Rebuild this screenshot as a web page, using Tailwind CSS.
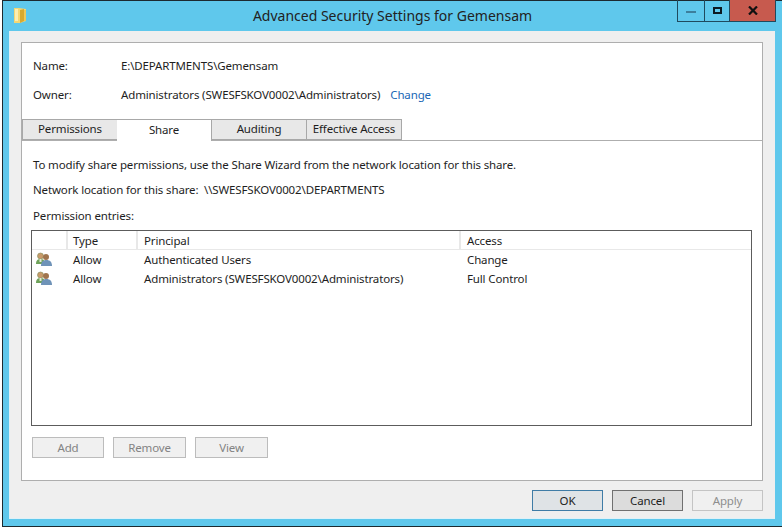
<!DOCTYPE html>
<html>
<head>
<meta charset="utf-8">
<script src="https://cdn.jsdelivr.net/npm/@tailwindcss/browser@4"></script>
</head>
<body class="bg-white">
<div class="w-[782px] h-[528px] overflow-hidden font-['Noto_Sans','Open_Sans',sans-serif] text-[11.5px] tracking-[-0.14px] leading-[16px] text-[#1e1e1e] pl-[2px]">
  <div class="w-[780px] h-[527px] bg-[#5fc8ec] border-l border-t border-b border-[#1c2a30] flex flex-col">
    <div class="h-[30px] shrink-0 relative flex items-center justify-center">
      <svg class="absolute left-[10px] top-[6px]" width="14" height="17" viewBox="0 0 14 17"><path d="M1 1h5l7 1v12l-6 2H1z" fill="#f4d774"/><path d="M7 3l4-1v12l-4 2z" fill="#d9a92f"/><path d="M2 2h3v12H2z" fill="#fbeeb0"/><path d="M11 3h2v11h-2z" fill="#f0c95a"/></svg>
      <span class="text-[14px] tracking-normal leading-[20px] text-[#222]">Advanced Security Settings for Gemensam</span>
      <div class="absolute right-[6px] top-[-1px] flex h-[22px] border border-t-0 border-[#1f4a5e]">
        <div class="w-[27px] border-r border-[#1f4a5e] flex items-center justify-center"><div class="w-[10px] h-[2px] mt-[2px] bg-[#3c7f9c]"></div></div>
        <div class="w-[25px] border-r border-[#1f4a5e] flex items-center justify-center"><div class="w-[9px] h-[7px] border-2 border-[#0c1a22]"></div></div>
        <div class="w-[45px] bg-[#c75a4e] flex items-center justify-center"><svg width="10" height="9" viewBox="0 0 10 9"><path d="M1 .5l8 8M9 .5l-8 8" stroke="#111" stroke-width="2.2" fill="none"/></svg></div>
      </div>
    </div>
    <div class="ml-[6px] mr-[7px] h-[488px] bg-[#efefef] border-l border-b border-[#dff1f8] pt-[11px] pl-[11px] pr-[12px]">
      <div class="h-[439px] bg-white border border-[#aeaeae] flex flex-col">
        <div class="h-[76px] shrink-0 pl-[11px] pt-[15px]">
          <div class="flex h-[16px]"><span class="w-[88px]">Name:</span><span>E:\DEPARTMENTS\Gemensam</span></div>
          <div class="flex h-[16px] mt-[13px]"><span class="w-[88px]">Owner:</span><span>Administrators (SWESFSKOV0002\Administrators)</span><span class="ml-[10px] text-[#1a67b5]">Change</span></div>
        </div>
        <div class="h-[22px] shrink-0 flex border-b border-[#aeaeae]">
          <div class="w-[96px] h-[21px] pb-px bg-[#e8e8e8] border border-[#a8a8a8] flex items-center justify-center">Permissions</div>
          <div class="w-[95px] h-[22px] pb-[2px] bg-white border-t border-r border-[#a8a8a8] flex items-center justify-center -ml-px z-10">Share</div>
          <div class="w-[95px] h-[21px] pb-px bg-[#e8e8e8] border-t border-b border-r border-[#a8a8a8] flex items-center justify-center">Auditing</div>
          <div class="w-[95px] h-[21px] pb-px bg-[#e8e8e8] border-t border-b border-r border-[#a8a8a8] flex items-center justify-center">Effective Access</div>
        </div>
        <div class="pl-[11px] pt-[16px]">
          <div>To modify share permissions, use the Share Wizard from the network location for this share.</div>
          <div class="mt-[9px]">Network location for this share:&nbsp; \\SWESFSKOV0002\DEPARTMENTS</div>
          <div class="mt-[10px]">Permission entries:</div>
        </div>
        <div class="ml-[9px] mt-[6px] w-[721px] h-[196px] border border-[#5c5c5c] shrink-0">
          <div class="h-[19px] flex border-b border-[#e8e8e8] leading-[20px]">
            <div class="w-[36px] border-r-2 border-[#e8e8e8]"></div>
            <div class="w-[70px] pl-[5px] border-r-2 border-[#e8e8e8]">Type</div>
            <div class="w-[323px] pl-[6px] border-r-2 border-[#e8e8e8]">Principal</div>
            <div class="pl-[6px]">Access</div>
          </div>
          <div class="h-[19px] flex items-center">
            <div class="w-[36px] pl-[3px]"><svg width="18" height="16" viewBox="0 0 18 16"><circle cx="5.500" cy="4" r="3" fill="#c99a6a" stroke="#7f8f5a" stroke-width=".6"/><path d="M1 12c0-4 2-5 4.500-5S10 8 10 12z" fill="#6fa35a"/><path d="M4.500 7h2v3h-2z" fill="#e8e8d8"/><circle cx="11" cy="5" r="3" fill="#a0754e"/><path d="M6 14c0-4 2-6 5.500-6S17 10 17 14z" fill="#6f93b8"/></svg></div>
            <div class="w-[70px] pl-[5px]">Allow</div>
            <div class="w-[323px] pl-[6px]">Authenticated Users</div>
            <div class="pl-[6px]">Change</div>
          </div>
          <div class="h-[19px] flex items-center">
            <div class="w-[36px] pl-[3px]"><svg width="18" height="16" viewBox="0 0 18 16"><circle cx="5.500" cy="4" r="3" fill="#c99a6a" stroke="#7f8f5a" stroke-width=".6"/><path d="M1 12c0-4 2-5 4.500-5S10 8 10 12z" fill="#6fa35a"/><path d="M4.500 7h2v3h-2z" fill="#e8e8d8"/><circle cx="11" cy="5" r="3" fill="#a0754e"/><path d="M6 14c0-4 2-6 5.500-6S17 10 17 14z" fill="#6f93b8"/></svg></div>
            <div class="w-[70px] pl-[5px]">Allow</div>
            <div class="w-[323px] pl-[6px]">Administrators (SWESFSKOV0002\Administrators)</div>
            <div class="pl-[6px]">Full Control</div>
          </div>
        </div>
        <div class="ml-[10px] mt-[11px] flex text-[#838383]">
          <div class="w-[72px] h-[21px] mr-[9px] bg-[#f0f0f0] border border-[#bcbcbc] flex items-center justify-center">Add</div>
          <div class="w-[73px] h-[21px] mr-[9px] bg-[#f0f0f0] border border-[#bcbcbc] flex items-center justify-center">Remove</div>
          <div class="w-[73px] h-[21px] bg-[#f0f0f0] border border-[#bcbcbc] flex items-center justify-center">View</div>
        </div>
      </div>
      <div class="mt-[9px] flex justify-end gap-[9px]">
        <div class="w-[71px] h-[21px] bg-[#dfe3e6] border border-[#3f7ca6] flex items-center justify-center">OK</div>
        <div class="w-[71px] h-[21px] bg-[#dcdcdc] border border-[#707070] flex items-center justify-center">Cancel</div>
        <div class="w-[71px] h-[21px] bg-[#f0f0f0] border border-[#c4c4c4] text-[#8e8e8e] flex items-center justify-center">Apply</div>
      </div>
    </div>
  </div>
</div>
</body>
</html>
